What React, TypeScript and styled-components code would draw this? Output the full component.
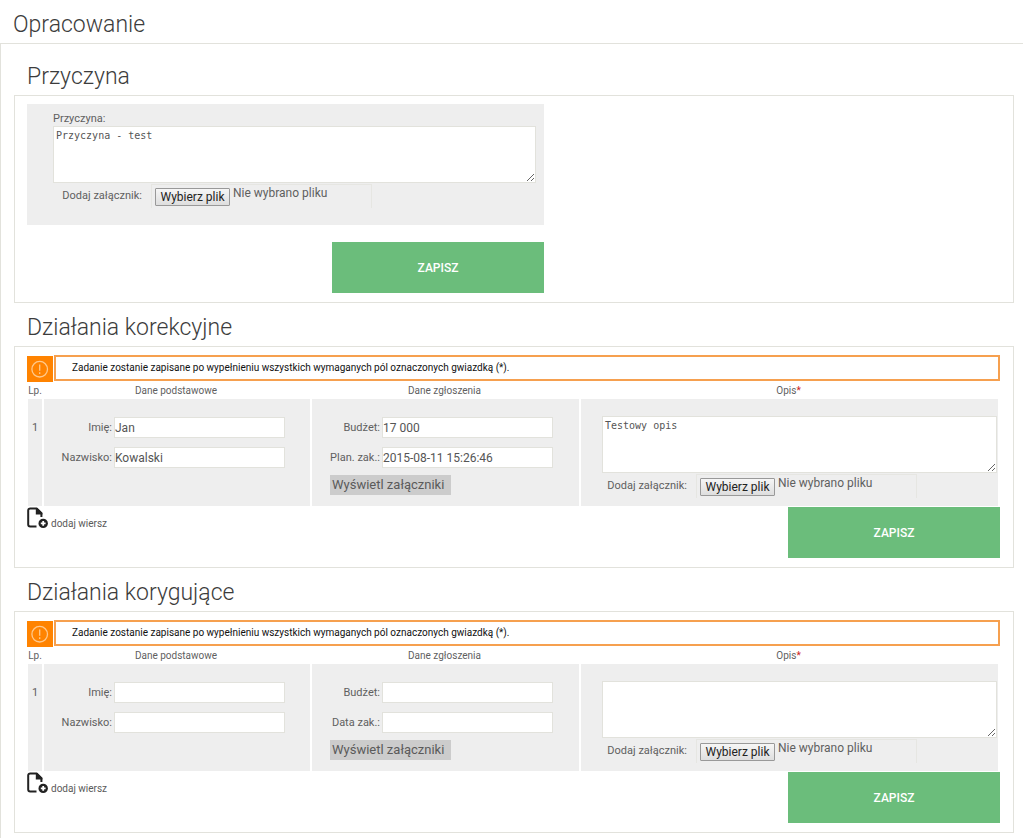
import React, { useId, useRef, useState } from 'react';
import styled, { createGlobalStyle } from 'styled-components';

const GlobalStyle = createGlobalStyle`
  * { box-sizing: border-box; }
  body {
    margin: 0;
    background: #fff;
    color: #5f5f5f;
    font-family: Roboto, "Liberation Sans", sans-serif;
    font-size: 11px;
    line-height: 16px;
  }
`;

const line = '#e2e2dc';

const Page = styled.main`
  display: flex;
  flex-direction: column;
  min-height: 100vh;
`;

const PageTitle = styled.h1`
  margin: 0;
  padding: 5px 13px 0;
  height: 43px;
  color: #3c3c3c;
  font-size: 23px;
  font-weight: 300;
  line-height: 40px;
`;

const Content = styled.div`
  flex: 1;
  padding: 8px 9px 4px 13px;
  border-top: 1px solid ${line};
  border-left: 1px solid ${line};
`;

const SectionTitle = styled.h2`
  margin: 0;
  padding: 5px 13px 0;
  height: 43px;
  color: #3c3c3c;
  font-size: 23px;
  font-weight: 300;
  line-height: 40px;
`;

const Panel = styled.div`
  padding: 8px 13px 9px 12px;
  border: 1px solid ${line};
`;

const CauseForm = styled.form`
  display: flex;
  flex-direction: column;
  align-items: flex-end;
  gap: 17px;
  width: 517px;
  max-width: 100%;
`;

const CauseBox = styled.div`
  display: flex;
  flex-direction: column;
  width: 100%;
  height: 121px;
  padding: 8px 8px 0 26px;
  background: #eee;
  line-height: 14px;
`;

const TextArea = styled.textarea`
  display: block;
  width: 100%;
  height: 57px;
  margin: 0;
  padding: 2px;
  border: 1px solid ${line};
  background: #fff;
  color: #555;
  font-family: "DejaVu Sans Mono", monospace;
  font-size: 10px;
  line-height: 14px;
  resize: both;
`;

const FileRow = styled.div<{ $labelWidth: number }>`
  display: grid;
  grid-template-columns: ${(p) => p.$labelWidth}px 221px;
  column-gap: 9px;
  margin-top: 1px;
  text-align: right;
  line-height: 23px;
`;

const FileBox = styled.div`
  display: flex;
  align-items: flex-start;
  gap: 3px;
  height: 24px;
  padding: 3px;
  border: 1px solid #e6e6e2;
  border-bottom: 0;
`;

const FileButton = styled.button`
  width: 75px;
  height: 18px;
  padding: 0;
  border: 1px solid #999;
  border-radius: 1px;
  background: linear-gradient(#f6f6f6, #dedede);
  color: #222;
  font-family: inherit;
  font-size: 12px;
  line-height: 16px;
  white-space: nowrap;
`;

const FileName = styled.span`
  font-size: 12px;
  line-height: 10px;
`;

const SaveButton = styled.button`
  width: 212px;
  height: 51px;
  border: 0;
  background: #6bbd7b;
  color: #fff;
  font-family: inherit;
  font-size: 12px;
  font-weight: 500;
`;

const Notice = styled.div`
  display: flex;
  align-items: flex-start;
  gap: 1px;
  height: 26px;
`;

const NoticeIcon = styled.svg`
  flex: none;
  width: 26px;
  height: 26px;
  margin-top: 1px;
`;

const NoticeText = styled.p`
  flex: 1;
  margin: 0;
  padding-left: 16px;
  height: 26px;
  border: 2px solid #f6a04f;
  color: #111;
  font-size: 10px;
  line-height: 21px;
`;

const Table = styled.table`
  width: calc(100% - 3px);
  margin: 0 1px;
  border-collapse: separate;
  border-spacing: 0;
  table-layout: fixed;
`;

const Head = styled.th<{ $width?: number }>`
  width: ${(p) => (p.$width ? `${p.$width}px` : 'auto')};
  height: 18px;
  padding: 1px 0 0;
  font-size: 10px;
  font-weight: 400;
  line-height: 17px;
  white-space: nowrap;
`;

const Required = styled.span`
  color: #c22;
`;

const Cell = styled.td`
  height: 107px;
  padding: 18px 0 0;
  border-left: 2px solid #fff;
  background: #eee;
  vertical-align: top;
`;

const NumberCell = styled(Cell)`
  border-left: 0;
  line-height: 21px;
  text-align: center;
`;

const DescriptionCell = styled(Cell)`
  padding: 17px 1px 0 21px;
`;

const Field = styled.div`
  display: grid;
  grid-template-columns: 68px 171px;
  column-gap: 2px;
  margin-bottom: 9px;
  line-height: 21px;
  text-align: right;
  white-space: nowrap;
`;

const TextInput = styled.input`
  width: 100%;
  height: 21px;
  padding: 0;
  border: 1px solid ${line};
  background: #fff;
  color: #555;
  font-family: inherit;
  font-size: 12px;
`;

const AttachmentsButton = styled.button`
  display: block;
  height: 20px;
  margin: -2px 0 0 18px;
  padding: 0 7px 0 2px;
  border: 0;
  background: #ccc;
  color: #5a5a5a;
  font-family: inherit;
  font-size: 13px;
  line-height: 20px;
  white-space: nowrap;
`;

const PanelFooter = styled.div`
  display: flex;
  align-items: flex-start;
  justify-content: space-between;
  margin-top: 1px;
`;

const AddRowButton = styled.button`
  display: flex;
  align-items: flex-end;
  gap: 3px;
  padding: 0;
  border: 0;
  background: none;
  color: #5a5a5a;
  font-family: inherit;
  font-size: 10px;
  line-height: 11px;
`;

const AddIcon = styled.svg`
  width: 21px;
  height: 22px;
`;

function FilePicker({ labelWidth }: { labelWidth: number }) {
  const id = useId();
  const input = useRef<HTMLInputElement>(null);
  const [name, setName] = useState('Nie wybrano pliku');
  return (
    <FileRow $labelWidth={labelWidth}>
      <label htmlFor={id}>Dodaj załącznik:</label>
      <FileBox>
        <input
          id={id}
          ref={input}
          type="file"
          hidden
          onChange={(e) => setName(e.target.files?.[0]?.name ?? 'Nie wybrano pliku')}
        />
        <FileButton type="button" onClick={() => input.current?.click()}>
          Wybierz plik
        </FileButton>
        <FileName>{name}</FileName>
      </FileBox>
    </FileRow>
  );
}

function LabeledInput({ label, value = '' }: { label: string; value?: string }) {
  const id = useId();
  return (
    <Field>
      <label htmlFor={id}>{label}</label>
      <TextInput id={id} type="text" defaultValue={value} />
    </Field>
  );
}

interface ActionsProps {
  title: string;
  firstName?: string;
  lastName?: string;
  budget?: string;
  dateLabel: string;
  date?: string;
  description?: string;
}

function ActionsSection(p: ActionsProps) {
  return (
    <section>
      <SectionTitle>{p.title}</SectionTitle>
      <Panel as="form">
        <Notice>
          <NoticeIcon viewBox="0 0 26 26" aria-hidden="true">
            <rect width="26" height="26" fill="#ff8300" />
            <circle cx="12.7" cy="13.2" r="7.8" fill="none" stroke="#ffc98c" strokeWidth="1.3" />
            <path d="M12.7 8.5v6.2M12.7 16.3v1.6" stroke="#ffc98c" strokeWidth="1.3" />
          </NoticeIcon>
          <NoticeText>
            Zadanie zostanie zapisane po wypełnieniu wszystkich wymaganych pól oznaczonych gwiazdką (*).
          </NoticeText>
        </Notice>
        <Table>
          <thead>
            <tr>
              <Head $width={14}>Lp.</Head>
              <Head $width={268}>Dane podstawowe</Head>
              <Head $width={269}>Dane zgłoszenia</Head>
              <Head>
                Opis<Required>*</Required>
              </Head>
            </tr>
          </thead>
          <tbody>
            <tr>
              <NumberCell>1</NumberCell>
              <Cell>
                <LabeledInput label="Imię:" value={p.firstName} />
                <LabeledInput label="Nazwisko:" value={p.lastName} />
              </Cell>
              <Cell>
                <LabeledInput label="Budżet:" value={p.budget} />
                <LabeledInput label={p.dateLabel} value={p.date} />
                <AttachmentsButton type="button">Wyświetl załączniki</AttachmentsButton>
              </Cell>
              <DescriptionCell>
                <TextArea aria-label="Opis" defaultValue={p.description} />
                <FilePicker labelWidth={85} />
              </DescriptionCell>
            </tr>
          </tbody>
        </Table>
        <PanelFooter>
          <AddRowButton type="button">
            <AddIcon viewBox="0 0 21 22" aria-hidden="true">
              <path
                d="M9.5 19.6H3.2a2 2 0 0 1-2-2V3.4a2 2 0 0 1 2-2H9.6L14.4 6.2V10"
                fill="none"
                stroke="#222"
                strokeWidth="2"
              />
              <path d="M8.8 1h1.6L15.4 6v1.6H8.8z" fill="#222" />
              <circle cx="16.2" cy="16.4" r="4.7" fill="#222" />
              <path d="M16.2 14v4.8M13.8 16.4h4.8" stroke="#fff" strokeWidth="1.8" />
            </AddIcon>
            dodaj wiersz
          </AddRowButton>
          <SaveButton type="button">ZAPISZ</SaveButton>
        </PanelFooter>
      </Panel>
    </section>
  );
}

export default function App() {
  return (
    <Page>
      <GlobalStyle />
      <PageTitle>Opracowanie</PageTitle>
      <Content>
        <section>
          <SectionTitle>Przyczyna</SectionTitle>
          <Panel>
            <CauseForm>
              <CauseBox>
                <label htmlFor="cause">Przyczyna:</label>
                <TextArea id="cause" defaultValue="Przyczyna - test" />
                <FilePicker labelWidth={89} />
              </CauseBox>
              <SaveButton type="button">ZAPISZ</SaveButton>
            </CauseForm>
          </Panel>
        </section>
        <ActionsSection
          title="Działania korekcyjne"
          firstName="Jan"
          lastName="Kowalski"
          budget="17 000"
          dateLabel="Plan. zak.:"
          date="2015-08-11 15:26:46"
          description="Testowy opis"
        />
        <ActionsSection title="Działania korygujące" dateLabel="Data zak.:" />
      </Content>
    </Page>
  );
}
